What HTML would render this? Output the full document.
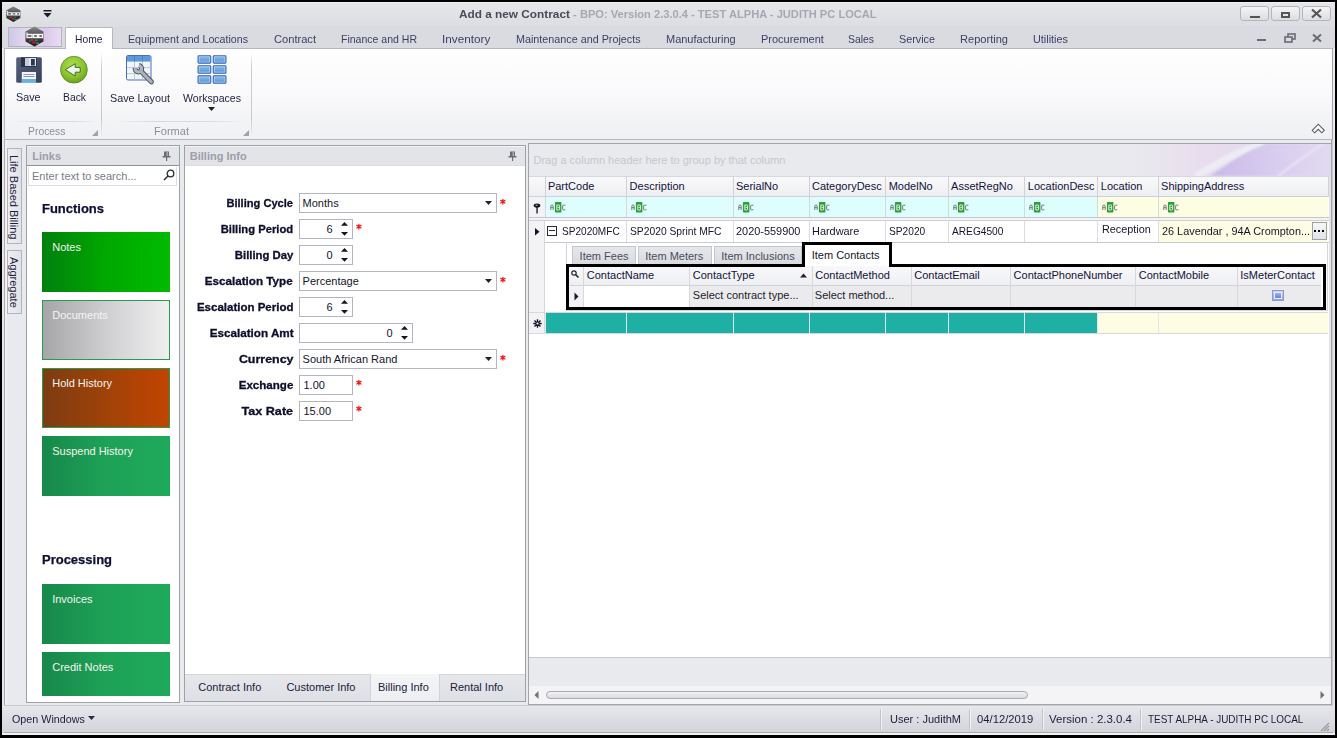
<!DOCTYPE html>
<html><head><meta charset="utf-8">
<style>
*{margin:0;padding:0;box-sizing:border-box}
html,body{width:1337px;height:738px;overflow:hidden;background:#000}
body{position:relative;font-family:"Liberation Sans",sans-serif;font-size:11px;color:#1e1e2e}
.a{position:absolute}
.t{position:absolute;white-space:nowrap;line-height:1}
svg{position:absolute;overflow:visible}
</style></head><body>
<div class="a" style="left:2px;top:2px;width:1333px;height:733px;background:#e9eaed"></div>
<div class="a" style="left:2px;top:140px;width:2px;height:595px;background:#e6e7ec"></div>
<div class="a" style="left:4px;top:140px;width:1px;height:595px;background:#a9abb1"></div>
<div class="a" style="left:5px;top:140px;width:2px;height:565px;background:#f0f1f4"></div>
<div class="a" style="left:1331px;top:140px;width:1px;height:595px;background:#a3a5ab"></div>
<div class="a" style="left:1332px;top:140px;width:1px;height:595px;background:#c8cad0"></div>
<div class="a" style="left:1333px;top:140px;width:2px;height:595px;background:#e4e5ea"></div>
<div class="a" style="left:2px;top:2px;width:1333px;height:25px;background:linear-gradient(#e6e7ea,#dcdde1)"></div>
<div class="a" style="left:2px;top:2px;width:1333px;height:1px;background:#f0f1f3"></div>
<svg style="left:6px;top:6px" width="14.8" height="16.4" viewBox="0 0 19 21">
<defs><linearGradient id="lg1" x1="0" y1="0" x2="0" y2="1"><stop offset="0" stop-color="#8a8a8a"/><stop offset="0.45" stop-color="#4a4a4a"/><stop offset="1" stop-color="#1e1e1e"/></linearGradient></defs>
<polygon points="9.5,0.5 18.5,5.5 18.5,15.5 9.5,20.5 0.5,15.5 0.5,5.5" fill="url(#lg1)"/>
<path d="M2,6.5 V11.5 H7 V8.5 H2 M8.5,8.5 H12.5 V11.5 H8.5 Z M13.8,8.5 H17.5 V11.5 H13.8 Z" stroke="#f4f4f4" stroke-width="1.3" fill="none"/>
<rect x="6" y="13" width="2" height="2" fill="#c82838"/><rect x="7.5" y="15.5" width="3" height="2" fill="#d02030"/>
<rect x="10" y="13.5" width="2.5" height="1.5" fill="#2a8a6a"/><rect x="11" y="16.5" width="3" height="1.5" fill="#2a8a6a"/><rect x="4" y="14" width="1.5" height="2" fill="#3a6a5a"/>
</svg>
<svg style="left:43px;top:10px" width="9" height="8" viewBox="0 0 9 8">
<rect x="0.5" y="0" width="8" height="1.5" fill="#1b1b2b"/>
<polygon points="0.5,3 8.5,3 4.5,7.5" fill="#1b1b2b"/></svg>
<div class="t" style="left:459.3px;top:7.80px;font-size:11.7px;color:#4b4c58;font-weight:bold;transform:scaleX(1.0104);transform-origin:0 0;">Add a new Contract</div>
<div class="t" style="left:569.5px;top:7.80px;font-size:11.7px;color:#a6a8b1;font-weight:bold;transform:scaleX(0.9508);transform-origin:0 0;">&nbsp;- BPO: Version 2.3.0.4 - TEST ALPHA - JUDITH PC LOCAL</div>
<div class="a" style="left:1240px;top:6px;width:29px;height:15px;border:1px solid #b3b5bb;border-radius:3px;background:linear-gradient(#f4f4f6,#dcdde1)"></div>
<div class="a" style="left:1271px;top:6px;width:29px;height:15px;border:1px solid #b3b5bb;border-radius:3px;background:linear-gradient(#f4f4f6,#dcdde1)"></div>
<div class="a" style="left:1302px;top:6px;width:29px;height:15px;border:1px solid #b3b5bb;border-radius:3px;background:linear-gradient(#f4f4f6,#dcdde1)"></div>
<div class="a" style="left:1250px;top:16px;width:10px;height:2px;background:#555"></div>
<div class="a" style="left:1281px;top:12px;width:9px;height:6px;border:2px solid #555;border-top-width:2px"></div>
<svg style="left:1311px;top:9px" width="11" height="9" viewBox="0 0 11 9">
<path d="M1,0.5 L10,8.5 M10,0.5 L1,8.5" stroke="#555" stroke-width="2.2"/></svg>
<div class="a" style="left:2px;top:27px;width:1333px;height:21px;background:#dadbe0"></div>
<div class="a" style="left:8px;top:27px;width:54px;height:20px;border:1px solid #b4b2bd;background:linear-gradient(90deg,#cfc7e8,#e6dcf0 40%,#dcc8ea 70%,#e8dcf2)"></div>
<svg style="left:25px;top:26px" width="19.0" height="21.0" viewBox="0 0 19 21">
<defs><linearGradient id="lg2" x1="0" y1="0" x2="0" y2="1"><stop offset="0" stop-color="#8a8a8a"/><stop offset="0.45" stop-color="#4a4a4a"/><stop offset="1" stop-color="#1e1e1e"/></linearGradient></defs>
<polygon points="9.5,0.5 18.5,5.5 18.5,15.5 9.5,20.5 0.5,15.5 0.5,5.5" fill="url(#lg2)"/>
<path d="M2,6.5 V11.5 H7 V8.5 H2 M8.5,8.5 H12.5 V11.5 H8.5 Z M13.8,8.5 H17.5 V11.5 H13.8 Z" stroke="#f4f4f4" stroke-width="1.3" fill="none"/>
<rect x="6" y="13" width="2" height="2" fill="#c82838"/><rect x="7.5" y="15.5" width="3" height="2" fill="#d02030"/>
<rect x="10" y="13.5" width="2.5" height="1.5" fill="#2a8a6a"/><rect x="11" y="16.5" width="3" height="1.5" fill="#2a8a6a"/><rect x="4" y="14" width="1.5" height="2" fill="#3a6a5a"/>
</svg>
<div class="a" style="left:65px;top:27px;width:48px;height:22px;background:#fff;border:1px solid #b6b8bf;border-bottom:none;border-radius:2px 2px 0 0"></div>
<div class="t" style="left:75.1px;top:33.69px;font-size:11px;color:#1f1f3f;font-weight:normal;transform:scaleX(0.9338);transform-origin:0 0;">Home</div>
<div class="t" style="left:127.5px;top:33.69px;font-size:11px;color:#3e4064;font-weight:normal;transform:scaleX(0.9666);transform-origin:0 0;">Equipment and Locations</div>
<div class="t" style="left:273.5px;top:33.69px;font-size:11px;color:#3e4064;font-weight:normal;transform:scaleX(1.0103);transform-origin:0 0;">Contract</div>
<div class="t" style="left:340.5px;top:33.69px;font-size:11px;color:#3e4064;font-weight:normal;transform:scaleX(0.9561);transform-origin:0 0;">Finance and HR</div>
<div class="t" style="left:442.1px;top:33.69px;font-size:11px;color:#3e4064;font-weight:normal;transform:scaleX(1.0697);transform-origin:0 0;">Inventory</div>
<div class="t" style="left:515.9px;top:33.69px;font-size:11px;color:#3e4064;font-weight:normal;transform:scaleX(0.9796);transform-origin:0 0;">Maintenance and Projects</div>
<div class="t" style="left:665.9px;top:33.69px;font-size:11px;color:#3e4064;font-weight:normal;transform:scaleX(0.9984);transform-origin:0 0;">Manufacturing</div>
<div class="t" style="left:760.5px;top:33.69px;font-size:11px;color:#3e4064;font-weight:normal;transform:scaleX(0.9972);transform-origin:0 0;">Procurement</div>
<div class="t" style="left:847.5px;top:33.69px;font-size:11px;color:#3e4064;font-weight:normal;transform:scaleX(0.9449);transform-origin:0 0;">Sales</div>
<div class="t" style="left:898.5px;top:33.69px;font-size:11px;color:#3e4064;font-weight:normal;transform:scaleX(0.9814);transform-origin:0 0;">Service</div>
<div class="t" style="left:959.5px;top:33.69px;font-size:11px;color:#3e4064;font-weight:normal;transform:scaleX(1.0064);transform-origin:0 0;">Reporting</div>
<div class="t" style="left:1032.5px;top:33.69px;font-size:11px;color:#3e4064;font-weight:normal;transform:scaleX(0.9873);transform-origin:0 0;">Utilities</div>
<div class="a" style="left:1257px;top:39px;width:9px;height:2px;background:#6a6a72"></div>
<svg style="left:1284px;top:33px" width="12" height="10" viewBox="0 0 12 10">
<rect x="4" y="1" width="7" height="5" fill="none" stroke="#6a6a72" stroke-width="1.6"/>
<rect x="1" y="4" width="7" height="5" fill="#dadbe0" stroke="#6a6a72" stroke-width="1.6"/></svg>
<svg style="left:1312px;top:34px" width="10" height="8" viewBox="0 0 10 8">
<path d="M1,0.5 L9,7.5 M9,0.5 L1,7.5" stroke="#6a6a72" stroke-width="2"/></svg>
<div class="a" style="left:4px;top:48px;width:1329px;height:92px;background:linear-gradient(#ffffff,#f9f9fb 50%,#eff0f3);border:1px solid #b5b7be;border-right-color:#a3a5ab"></div>
<div class="a" style="left:66px;top:48px;width:46px;height:2px;background:#fff"></div>
<div class="a" style="left:101px;top:52px;width:1px;height:85px;background:linear-gradient(rgba(200,202,208,0),#c8cad0 20%,#c8cad0 80%,rgba(200,202,208,0))"></div>
<div class="a" style="left:251px;top:52px;width:1px;height:85px;background:linear-gradient(rgba(200,202,208,0),#c8cad0 20%,#c8cad0 80%,rgba(200,202,208,0))"></div>
<div class="a" style="left:14px;top:121px;width:84px;height:1px;background:linear-gradient(90deg,rgba(215,217,222,0),#d7d9de 30%,#d7d9de 70%,rgba(215,217,222,0))"></div>
<div class="a" style="left:112px;top:121px;width:136px;height:1px;background:linear-gradient(90deg,rgba(215,217,222,0),#d7d9de 30%,#d7d9de 70%,rgba(215,217,222,0))"></div>
<div class="t" style="left:27.5px;top:126.39px;font-size:11px;color:#8c8e98;font-weight:normal;transform:scaleX(0.9437);transform-origin:0 0;">Process</div>
<div class="t" style="left:153.6px;top:126.39px;font-size:11px;color:#8c8e98;font-weight:normal;transform:scaleX(1.0046);transform-origin:0 0;">Format</div>
<svg style="left:92px;top:130px" width="6" height="6" viewBox="0 0 6 6"><polygon points="6,0 6,6 0,6" fill="#a0a2a8"/></svg>
<svg style="left:243px;top:130px" width="6" height="6" viewBox="0 0 6 6"><polygon points="6,0 6,6 0,6" fill="#a0a2a8"/></svg>
<svg style="left:1311px;top:123px" width="14" height="11" viewBox="0 0 14 11">
<polygon points="1.2,7.3 7.3,1.2 13.3,7.3 10.8,9.8 7.3,6.3 3.7,9.8" fill="#fbfbfc" stroke="#5c5c64" stroke-width="1.1" stroke-linejoin="miter"/></svg>
<svg style="left:16px;top:57px" width="26" height="26" viewBox="0 0 26 26">
<defs><linearGradient id="fl" x1="0" y1="0" x2="1" y2="1"><stop offset="0" stop-color="#56627e"/><stop offset="1" stop-color="#36405a"/></linearGradient></defs>
<rect x="0.2" y="0.2" width="25.6" height="25.6" rx="1.5" fill="url(#fl)"/>
<rect x="5" y="0.3" width="15.7" height="9.7" fill="#2a3248"/>
<rect x="9" y="1" width="11" height="8" fill="#dfe4ec"/>
<rect x="9" y="1" width="4" height="8" fill="#c4ccd8"/>
<rect x="15" y="2" width="3.8" height="6.5" fill="#2e3850"/>
<rect x="5.8" y="15" width="14.2" height="10.8" fill="#f4f6fa"/>
<rect x="5.8" y="22" width="14.2" height="3.8" fill="#6cb0e0"/>
<line x1="7.5" y1="17.5" x2="18.5" y2="17.5" stroke="#a890d0" stroke-width="1"/>
<line x1="7.5" y1="19.5" x2="18.5" y2="19.5" stroke="#6a9ad8" stroke-width="1"/>
</svg>
<div class="t" style="left:16px;top:92.49px;font-size:11px;color:#1f1f3f;font-weight:normal;transform:scaleX(0.9771);transform-origin:0 0;">Save</div>
<svg style="left:60px;top:56px" width="28" height="28" viewBox="0 0 28 28">
<defs><radialGradient id="gb" cx="0.45" cy="0.35" r="0.7"><stop offset="0" stop-color="#b0de50"/><stop offset="0.6" stop-color="#8cc232"/><stop offset="1" stop-color="#5e9a1c"/></radialGradient></defs>
<circle cx="13.9" cy="13.7" r="13.4" fill="url(#gb)" stroke="#5a8a1e" stroke-width="0.8"/>
<polygon points="5.3,13.7 15.2,7.7 15.2,11.4 20.2,11.4 20.2,16.2 15.2,16.2 15.2,20" fill="#f0f4ec" stroke="#3e7210" stroke-width="1"/>
</svg>
<div class="t" style="left:62.5px;top:92.49px;font-size:11px;color:#1f1f3f;font-weight:normal;transform:scaleX(0.9405);transform-origin:0 0;">Back</div>
<svg style="left:125px;top:55px" width="30" height="30" viewBox="0 0 30 30">
<rect x="1.5" y="0.5" width="24.5" height="24.5" rx="1.5" fill="#f2f6fc" stroke="#4a6cc0"/>
<rect x="2" y="1" width="23.5" height="5.6" fill="#5f9ad8"/>
<path d="M2,12.6 H25.5 M2,18.6 H25.5 M9.5,6.6 V24.5 M17.5,6.6 V24.5" stroke="#b8c8e2" stroke-width="1"/>
<path d="M9.5,1 V6.6 M17.5,1 V6.6" stroke="#4a84c8" stroke-width="1"/>
<path d="M13.96,10.55 A3.2,3.2 0 1 1 10.25,13.14" stroke="#50565e" stroke-width="5" fill="none"/>
<line x1="15.5" y1="15.8" x2="26.3" y2="26.8" stroke="#50565e" stroke-width="5.2" stroke-linecap="round"/>
<path d="M13.96,10.55 A3.2,3.2 0 1 1 10.25,13.14" stroke="#b4bac4" stroke-width="3" fill="none"/>
<line x1="15.5" y1="15.8" x2="26.3" y2="26.8" stroke="#aab0ba" stroke-width="3.2" stroke-linecap="round"/>
</svg>
<div class="t" style="left:109.7px;top:92.69px;font-size:11px;color:#1f1f3f;font-weight:normal;transform:scaleX(0.9811);transform-origin:0 0;">Save Layout</div>
<svg style="left:196.5px;top:55px" width="30" height="30" viewBox="0 0 30 30"><defs><linearGradient id="wsg" x1="0" y1="0" x2="0" y2="1"><stop offset="0" stop-color="#86b8e4"/><stop offset="1" stop-color="#5896d2"/></linearGradient></defs><rect x="1.05" y="0.75" width="12.7" height="7.4" rx="0.8" fill="url(#wsg)" stroke="#3c68bc" stroke-width="1.1"/><rect x="2.15" y="1.85" width="10.5" height="5.2" fill="none" stroke="#c4def4" stroke-width="0.7" opacity="0.8"/><rect x="16.25" y="0.75" width="12.7" height="7.4" rx="0.8" fill="url(#wsg)" stroke="#3c68bc" stroke-width="1.1"/><rect x="17.35" y="1.85" width="10.5" height="5.2" fill="none" stroke="#c4def4" stroke-width="0.7" opacity="0.8"/><rect x="1.05" y="10.80" width="12.7" height="7.4" rx="0.8" fill="url(#wsg)" stroke="#3c68bc" stroke-width="1.1"/><rect x="2.15" y="11.90" width="10.5" height="5.2" fill="none" stroke="#c4def4" stroke-width="0.7" opacity="0.8"/><rect x="16.25" y="10.80" width="12.7" height="7.4" rx="0.8" fill="url(#wsg)" stroke="#3c68bc" stroke-width="1.1"/><rect x="17.35" y="11.90" width="10.5" height="5.2" fill="none" stroke="#c4def4" stroke-width="0.7" opacity="0.8"/><rect x="1.05" y="20.85" width="12.7" height="7.4" rx="0.8" fill="url(#wsg)" stroke="#3c68bc" stroke-width="1.1"/><rect x="2.15" y="21.95" width="10.5" height="5.2" fill="none" stroke="#c4def4" stroke-width="0.7" opacity="0.8"/><rect x="16.25" y="20.85" width="12.7" height="7.4" rx="0.8" fill="url(#wsg)" stroke="#3c68bc" stroke-width="1.1"/><rect x="17.35" y="21.95" width="10.5" height="5.2" fill="none" stroke="#c4def4" stroke-width="0.7" opacity="0.8"/></svg>
<div class="t" style="left:183px;top:92.69px;font-size:11px;color:#1f1f3f;font-weight:normal;transform:scaleX(0.9616);transform-origin:0 0;">Workspaces</div>
<svg style="left:208px;top:107px" width="7" height="4" viewBox="0 0 7 4"><polygon points="0,0 7,0 3.5,4" fill="#1f1f2f"/></svg>
<div class="a" style="left:7px;top:148px;width:15px;height:96px;background:linear-gradient(90deg,#eeeff2,#e2e3e7);border:1px solid #b2b4ba"></div>
<div class="a" style="left:7px;top:250px;width:15px;height:64px;background:linear-gradient(90deg,#eeeff2,#e2e3e7);border:1px solid #b2b4ba"></div>
<div class="t" style="left:10px;top:154.6px;font-size:11px;color:#1f1f3f;transform-origin:0 0;transform:translate(9px,0) rotate(90deg)">Life Based Billing</div>
<div class="t" style="left:10px;top:256.6px;font-size:11px;color:#1f1f3f;transform-origin:0 0;transform:translate(9px,0) rotate(90deg)">Aggregate</div>
<div class="a" style="left:26px;top:145px;width:154px;height:558px;background:#fff;border:1px solid #9fa1a9"></div>
<div class="a" style="left:27px;top:146px;width:152px;height:20px;background:#e3e4e8;border-top:1px solid #f4f4f6;border-bottom:1px solid #8f9199"></div>
<div class="t" style="left:32.3px;top:150.59px;font-size:11px;color:#9c9eaa;font-weight:bold;">Links</div>
<svg style="left:162px;top:151px" width="9" height="10" viewBox="0 0 9 10">
<rect x="2" y="0.5" width="5" height="5" fill="#6b6d75"/><rect x="0.5" y="5" width="8" height="1.5" fill="#6b6d75"/>
<rect x="4" y="6" width="1.2" height="4" fill="#6b6d75"/><rect x="4.5" y="1" width="1.5" height="4" fill="#a8aab0"/></svg>
<div class="a" style="left:28px;top:167px;width:149px;height:19px;background:#fff;border:1px solid #dcdde2;border-top:none"></div>
<div class="t" style="left:32px;top:170.89px;font-size:11px;color:#7a7c86;font-weight:normal;">Enter text to search...</div>
<svg style="left:163px;top:169px" width="12" height="12" viewBox="0 0 12 12">
<circle cx="7.5" cy="4.5" r="3.3" fill="none" stroke="#2a2a32" stroke-width="1.3"/>
<line x1="5.2" y1="6.8" x2="1" y2="11" stroke="#2a2a32" stroke-width="1.4"/></svg>
<div class="t" style="left:42px;top:201.60px;font-size:13px;color:#0e0e34;font-weight:bold;transform:scaleX(0.9983);transform-origin:0 0;-webkit-text-stroke:0.25px #0e0e34;">Functions</div>
<div class="t" style="left:42px;top:553.20px;font-size:13px;color:#0e0e34;font-weight:bold;transform:scaleX(0.9988);transform-origin:0 0;-webkit-text-stroke:0.25px #0e0e34;">Processing</div>
<div class="a" style="left:42px;top:232px;width:128px;height:60px;background:linear-gradient(90deg,#00800f,#00a800 50%,#00bb00);"></div>
<div class="t" style="left:52.2px;top:241.69px;font-size:11px;color:#f4f4ec;font-weight:normal;">Notes</div>
<div class="a" style="left:42px;top:300px;width:128px;height:60px;background:linear-gradient(90deg,#a6a6a8,#d2d2d4 55%,#efeff0);border:1px solid #2a9a52;"></div>
<div class="t" style="left:52.2px;top:309.69px;font-size:11px;color:#f4f4f4;font-weight:normal;">Documents</div>
<div class="a" style="left:42px;top:368px;width:128px;height:60px;background:linear-gradient(90deg,#7c3c12,#a04208 50%,#c24400);border:1px solid #22a050;"></div>
<div class="t" style="left:52.2px;top:377.69px;font-size:11px;color:#f4f4ec;font-weight:normal;">Hold History</div>
<div class="a" style="left:42px;top:436px;width:128px;height:60px;background:linear-gradient(90deg,#17884a,#1da257 50%,#1fa95b);"></div>
<div class="t" style="left:52.2px;top:445.69px;font-size:11px;color:#f4f4ec;font-weight:normal;">Suspend History</div>
<div class="a" style="left:42px;top:584px;width:128px;height:60px;background:linear-gradient(90deg,#17884a,#1da257 50%,#1fa95b);"></div>
<div class="t" style="left:52.2px;top:593.69px;font-size:11px;color:#f4f4ec;font-weight:normal;">Invoices</div>
<div class="a" style="left:42px;top:652px;width:128px;height:44px;background:linear-gradient(90deg,#17884a,#1da257 50%,#1fa95b);"></div>
<div class="t" style="left:52.2px;top:661.69px;font-size:11px;color:#f4f4ec;font-weight:normal;">Credit Notes</div>
<div class="a" style="left:184px;top:145px;width:342px;height:557px;background:#fff;border:1px solid #9fa1a9"></div>
<div class="a" style="left:185px;top:146px;width:340px;height:20px;background:#e3e4e8;border-top:1px solid #f4f4f6;border-bottom:1px solid #dcdde1"></div>
<div class="t" style="left:189.8px;top:150.59px;font-size:11px;color:#9c9eaa;font-weight:bold;">Billing Info</div>
<svg style="left:508px;top:151px" width="9" height="10" viewBox="0 0 9 10">
<rect x="2" y="0.5" width="5" height="5" fill="#6b6d75"/><rect x="0.5" y="5" width="8" height="1.5" fill="#6b6d75"/>
<rect x="4" y="6" width="1.2" height="4" fill="#6b6d75"/><rect x="4.5" y="1" width="1.5" height="4" fill="#a8aab0"/></svg>
<div class="t" style="right:1043.8px;top:197.87px;font-size:11.5px;color:#0e0e2c;font-weight:bold;transform:scaleX(0.9650);transform-origin:100% 0;-webkit-text-stroke:0.3px #0e0e2c;">Billing Cycle</div>
<div class="a" style="left:299px;top:193px;width:198px;height:20px;background:#fff;border:1px solid #b4b6bd"></div>
<div class="t" style="left:302.6px;top:197.79px;font-size:11px;color:#14142c;font-weight:normal;">Months</div>
<svg style="left:485px;top:201px" width="7" height="4" viewBox="0 0 7 4"><polygon points="0,0 7,0 3.5,4" fill="#23232b"/></svg>
<svg style="left:500px;top:198.5px" width="6" height="6" viewBox="0 0 6 6"><path d="M2.9,0.3 V5.1 M0.8,1.4 L5,4 M5,1.4 L0.8,4" stroke="#f21c1c" stroke-width="1.25" stroke-linecap="round"/></svg>
<div class="t" style="right:1043.8px;top:223.87px;font-size:11.5px;color:#0e0e2c;font-weight:bold;transform:scaleX(0.9769);transform-origin:100% 0;-webkit-text-stroke:0.3px #0e0e2c;">Billing Period</div>
<div class="a" style="left:299px;top:219px;width:54px;height:20px;background:#fff;border:1px solid #b4b6bd"></div>
<div class="t" style="right:1004.5px;top:223.99px;font-size:11px;color:#14142c;font-weight:normal;">6</div>
<svg style="left:341px;top:221.8px" width="8" height="14" viewBox="0 0 8 14">
<polygon points="0,3.8 7,3.8 3.5,0" fill="#15151d"/><polygon points="0,9.9 7,9.9 3.5,13.7" fill="#15151d"/></svg>
<svg style="left:355.6px;top:223.5px" width="6" height="6" viewBox="0 0 6 6"><path d="M2.9,0.3 V5.1 M0.8,1.4 L5,4 M5,1.4 L0.8,4" stroke="#f21c1c" stroke-width="1.25" stroke-linecap="round"/></svg>
<div class="t" style="right:1043.8px;top:249.87px;font-size:11.5px;color:#0e0e2c;font-weight:bold;transform:scaleX(0.9861);transform-origin:100% 0;-webkit-text-stroke:0.3px #0e0e2c;">Billing Day</div>
<div class="a" style="left:299px;top:245px;width:54px;height:20px;background:#fff;border:1px solid #b4b6bd"></div>
<div class="t" style="right:1004.5px;top:249.99px;font-size:11px;color:#14142c;font-weight:normal;">0</div>
<svg style="left:341px;top:247.8px" width="8" height="14" viewBox="0 0 8 14">
<polygon points="0,3.8 7,3.8 3.5,0" fill="#15151d"/><polygon points="0,9.9 7,9.9 3.5,13.7" fill="#15151d"/></svg>
<div class="t" style="right:1043.8px;top:275.87px;font-size:11.5px;color:#0e0e2c;font-weight:bold;transform:scaleX(1.0149);transform-origin:100% 0;-webkit-text-stroke:0.3px #0e0e2c;">Escalation Type</div>
<div class="a" style="left:299px;top:271px;width:198px;height:20px;background:#fff;border:1px solid #b4b6bd"></div>
<div class="t" style="left:302.6px;top:275.79px;font-size:11px;color:#14142c;font-weight:normal;">Percentage</div>
<svg style="left:485px;top:279px" width="7" height="4" viewBox="0 0 7 4"><polygon points="0,0 7,0 3.5,4" fill="#23232b"/></svg>
<svg style="left:500px;top:276.5px" width="6" height="6" viewBox="0 0 6 6"><path d="M2.9,0.3 V5.1 M0.8,1.4 L5,4 M5,1.4 L0.8,4" stroke="#f21c1c" stroke-width="1.25" stroke-linecap="round"/></svg>
<div class="t" style="right:1043.8px;top:301.87px;font-size:11.5px;color:#0e0e2c;font-weight:bold;transform:scaleX(1.0010);transform-origin:100% 0;-webkit-text-stroke:0.3px #0e0e2c;">Escalation Period</div>
<div class="a" style="left:299px;top:297px;width:54px;height:20px;background:#fff;border:1px solid #b4b6bd"></div>
<div class="t" style="right:1004.5px;top:301.99px;font-size:11px;color:#14142c;font-weight:normal;">6</div>
<svg style="left:341px;top:299.8px" width="8" height="14" viewBox="0 0 8 14">
<polygon points="0,3.8 7,3.8 3.5,0" fill="#15151d"/><polygon points="0,9.9 7,9.9 3.5,13.7" fill="#15151d"/></svg>
<div class="t" style="right:1043.8px;top:327.87px;font-size:11.5px;color:#0e0e2c;font-weight:bold;transform:scaleX(1.0163);transform-origin:100% 0;-webkit-text-stroke:0.3px #0e0e2c;">Escalation Amt</div>
<div class="a" style="left:299px;top:323px;width:114px;height:20px;background:#fff;border:1px solid #b4b6bd"></div>
<div class="t" style="right:944.5px;top:327.99px;font-size:11px;color:#14142c;font-weight:normal;">0</div>
<svg style="left:401px;top:325.8px" width="8" height="14" viewBox="0 0 8 14">
<polygon points="0,3.8 7,3.8 3.5,0" fill="#15151d"/><polygon points="0,9.9 7,9.9 3.5,13.7" fill="#15151d"/></svg>
<div class="t" style="right:1043.8px;top:353.87px;font-size:11.5px;color:#0e0e2c;font-weight:bold;transform:scaleX(1.0813);transform-origin:100% 0;-webkit-text-stroke:0.3px #0e0e2c;">Currency</div>
<div class="a" style="left:299px;top:349px;width:198px;height:20px;background:#fff;border:1px solid #b4b6bd"></div>
<div class="t" style="left:302.6px;top:353.79px;font-size:11px;color:#14142c;font-weight:normal;">South African Rand</div>
<svg style="left:485px;top:357px" width="7" height="4" viewBox="0 0 7 4"><polygon points="0,0 7,0 3.5,4" fill="#23232b"/></svg>
<svg style="left:500px;top:354.5px" width="6" height="6" viewBox="0 0 6 6"><path d="M2.9,0.3 V5.1 M0.8,1.4 L5,4 M5,1.4 L0.8,4" stroke="#f21c1c" stroke-width="1.25" stroke-linecap="round"/></svg>
<div class="t" style="right:1043.8px;top:379.87px;font-size:11.5px;color:#0e0e2c;font-weight:bold;transform:scaleX(1.0050);transform-origin:100% 0;-webkit-text-stroke:0.3px #0e0e2c;">Exchange</div>
<div class="a" style="left:299px;top:375px;width:54px;height:20px;background:#fff;border:1px solid #b4b6bd"></div>
<div class="t" style="left:303.5px;top:379.99px;font-size:11px;color:#14142c;font-weight:normal;">1.00</div>
<svg style="left:355.6px;top:379.5px" width="6" height="6" viewBox="0 0 6 6"><path d="M2.9,0.3 V5.1 M0.8,1.4 L5,4 M5,1.4 L0.8,4" stroke="#f21c1c" stroke-width="1.25" stroke-linecap="round"/></svg>
<div class="t" style="right:1043.8px;top:405.87px;font-size:11.5px;color:#0e0e2c;font-weight:bold;transform:scaleX(1.0959);transform-origin:100% 0;-webkit-text-stroke:0.3px #0e0e2c;">Tax Rate</div>
<div class="a" style="left:299px;top:401px;width:54px;height:20px;background:#fff;border:1px solid #b4b6bd"></div>
<div class="t" style="left:303.5px;top:405.99px;font-size:11px;color:#14142c;font-weight:normal;">15.00</div>
<svg style="left:355.6px;top:405.5px" width="6" height="6" viewBox="0 0 6 6"><path d="M2.9,0.3 V5.1 M0.8,1.4 L5,4 M5,1.4 L0.8,4" stroke="#f21c1c" stroke-width="1.25" stroke-linecap="round"/></svg>
<div class="a" style="left:185px;top:674px;width:340px;height:27px;background:linear-gradient(#e6e7eb,#dfe0e5);border-top:1px solid #d4d6db"></div>
<div class="a" style="left:370px;top:674px;width:70px;height:27px;background:linear-gradient(#f4f5f7,#eceef1);border-left:1px solid #d0d2d8;border-right:1px solid #d0d2d8"></div>
<div class="t" style="left:198.3px;top:681.89px;font-size:11px;color:#20203a;font-weight:normal;">Contract Info</div>
<div class="t" style="left:286.4px;top:681.89px;font-size:11px;color:#20203a;font-weight:normal;">Customer Info</div>
<div class="t" style="left:378px;top:681.89px;font-size:11px;color:#20203a;font-weight:normal;">Billing Info</div>
<div class="t" style="left:450px;top:681.89px;font-size:11px;color:#20203a;font-weight:normal;">Rental Info</div>
<div class="a" style="left:528px;top:143px;width:804px;height:562px;background:#fff;border:1px solid #a3a5ad"></div>
<div class="a" style="left:529px;top:144px;width:802px;height:32px;background:#e9eaee"></div>
<svg style="left:1098px;top:144px;overflow:hidden" width="233" height="32" viewBox="0 0 233 32">
<defs>
<linearGradient id="pk" x1="0" x2="1"><stop offset="0" stop-color="#e9eaee" stop-opacity="0"/><stop offset="0.45" stop-color="#e8dcee"/><stop offset="1" stop-color="#e4daf0"/></linearGradient>
<linearGradient id="lv" x1="0" y1="0" x2="1" y2="0"><stop offset="0" stop-color="#c8b9e8"/><stop offset="0.45" stop-color="#d6caee"/><stop offset="1" stop-color="#e2daf2"/></linearGradient>
<filter id="bl"><feGaussianBlur stdDeviation="1.2"/></filter>
</defs>
<rect x="0" y="0" width="233" height="32" fill="url(#pk)"/>
<path d="M98,32 C122,18 142,6 166,0" stroke="#efeff4" stroke-width="7" opacity="0.85" fill="none" filter="url(#bl)"/>
<path d="M112,32 C135,17 150,6 168,0 L233,0 L233,32 Z" fill="url(#lv)" filter="url(#bl)"/>
<path d="M180,32 C198,18 212,8 226,0" stroke="#ece6f6" stroke-width="2" fill="none" filter="url(#bl)"/>
</svg>
<div class="t" style="left:533.5px;top:155.39px;font-size:11px;color:#c5c7cd;font-weight:normal;">Drag a column header here to group by that column</div>
<div class="a" style="left:529px;top:176px;width:800px;height:21px;background:linear-gradient(#f9f9fb,#eeeff2);border-top:1px solid #d6d8dd;border-bottom:1px solid #cdd0d5"></div>
<div class="a" style="left:1329px;top:176px;width:2px;height:481px;background:#e3e4e8"></div>
<div class="a" style="left:544.5px;top:176px;width:1px;height:21px;background:#d0d2d7"></div>
<div class="t" style="left:547.9px;top:181.49px;font-size:11px;color:#12123a;font-weight:normal;">PartCode</div>
<div class="a" style="left:626.2px;top:176px;width:1px;height:21px;background:#d0d2d7"></div>
<div class="t" style="left:629.6px;top:181.49px;font-size:11px;color:#12123a;font-weight:normal;">Description</div>
<div class="a" style="left:732.6px;top:176px;width:1px;height:21px;background:#d0d2d7"></div>
<div class="t" style="left:736.0px;top:181.49px;font-size:11px;color:#12123a;font-weight:normal;">SerialNo</div>
<div class="a" style="left:808.6px;top:176px;width:1px;height:21px;background:#d0d2d7"></div>
<div class="t" style="left:812.0px;top:181.49px;font-size:11px;color:#12123a;font-weight:normal;">CategoryDesc</div>
<div class="a" style="left:885.3px;top:176px;width:1px;height:21px;background:#d0d2d7"></div>
<div class="t" style="left:888.6999999999999px;top:181.49px;font-size:11px;color:#12123a;font-weight:normal;">ModelNo</div>
<div class="a" style="left:947.7px;top:176px;width:1px;height:21px;background:#d0d2d7"></div>
<div class="t" style="left:951.1px;top:181.49px;font-size:11px;color:#12123a;font-weight:normal;">AssetRegNo</div>
<div class="a" style="left:1024.4px;top:176px;width:1px;height:21px;background:#d0d2d7"></div>
<div class="t" style="left:1027.8000000000002px;top:181.49px;font-size:11px;color:#12123a;font-weight:normal;">LocationDesc</div>
<div class="a" style="left:1097.4px;top:176px;width:1px;height:21px;background:#d0d2d7"></div>
<div class="t" style="left:1100.8000000000002px;top:181.49px;font-size:11px;color:#12123a;font-weight:normal;">Location</div>
<div class="a" style="left:1157.7px;top:176px;width:1px;height:21px;background:#d0d2d7"></div>
<div class="t" style="left:1161.1000000000001px;top:181.49px;font-size:11px;color:#12123a;font-weight:normal;">ShippingAddress</div>
<div class="a" style="left:1328px;top:176px;width:1px;height:21px;background:#d0d2d7"></div>
<div class="a" style="left:529px;top:197px;width:16px;height:20px;background:#f3f3f5"></div>
<div class="a" style="left:544.5px;top:197px;width:81.70000000000005px;height:20px;background:#defdfd;border-left:1px solid #d6d8dd"></div>
<svg style="left:549.5px;top:202.2px" width="16" height="11" viewBox="0 0 16 11"><rect x="4.9" y="0" width="6.5" height="10.5" rx="0.8" fill="#2f9e3b"/><path d="M0.8,8 V4.2 Q0.8,3 2,3 Q3.2,3 3.2,4.2 V8 M0.8,5.6 H3.2" stroke="#6a6c74" stroke-width="0.9" fill="none"/><path d="M6.8,3 H9 Q9.6,3 9.6,3.8 V7.2 Q9.6,8 9,8 H6.8 Z" stroke="#f0f8f0" stroke-width="0.9" fill="none"/><rect x="7.6" y="5" width="1.2" height="1" fill="#f0f8f0"/><path d="M15.4,3.2 H13.4 Q12.6,3.2 12.6,4 V7 Q12.6,7.8 13.4,7.8 H15.4" stroke="#6a6c74" stroke-width="0.9" fill="none"/></svg>
<div class="a" style="left:626.2px;top:197px;width:106.39999999999998px;height:20px;background:#defdfd;border-left:1px solid #d6d8dd"></div>
<svg style="left:631.2px;top:202.2px" width="16" height="11" viewBox="0 0 16 11"><rect x="4.9" y="0" width="6.5" height="10.5" rx="0.8" fill="#2f9e3b"/><path d="M0.8,8 V4.2 Q0.8,3 2,3 Q3.2,3 3.2,4.2 V8 M0.8,5.6 H3.2" stroke="#6a6c74" stroke-width="0.9" fill="none"/><path d="M6.8,3 H9 Q9.6,3 9.6,3.8 V7.2 Q9.6,8 9,8 H6.8 Z" stroke="#f0f8f0" stroke-width="0.9" fill="none"/><rect x="7.6" y="5" width="1.2" height="1" fill="#f0f8f0"/><path d="M15.4,3.2 H13.4 Q12.6,3.2 12.6,4 V7 Q12.6,7.8 13.4,7.8 H15.4" stroke="#6a6c74" stroke-width="0.9" fill="none"/></svg>
<div class="a" style="left:732.6px;top:197px;width:76.0px;height:20px;background:#defdfd;border-left:1px solid #d6d8dd"></div>
<svg style="left:737.6px;top:202.2px" width="16" height="11" viewBox="0 0 16 11"><rect x="4.9" y="0" width="6.5" height="10.5" rx="0.8" fill="#2f9e3b"/><path d="M0.8,8 V4.2 Q0.8,3 2,3 Q3.2,3 3.2,4.2 V8 M0.8,5.6 H3.2" stroke="#6a6c74" stroke-width="0.9" fill="none"/><path d="M6.8,3 H9 Q9.6,3 9.6,3.8 V7.2 Q9.6,8 9,8 H6.8 Z" stroke="#f0f8f0" stroke-width="0.9" fill="none"/><rect x="7.6" y="5" width="1.2" height="1" fill="#f0f8f0"/><path d="M15.4,3.2 H13.4 Q12.6,3.2 12.6,4 V7 Q12.6,7.8 13.4,7.8 H15.4" stroke="#6a6c74" stroke-width="0.9" fill="none"/></svg>
<div class="a" style="left:808.6px;top:197px;width:76.69999999999993px;height:20px;background:#defdfd;border-left:1px solid #d6d8dd"></div>
<svg style="left:813.6px;top:202.2px" width="16" height="11" viewBox="0 0 16 11"><rect x="4.9" y="0" width="6.5" height="10.5" rx="0.8" fill="#2f9e3b"/><path d="M0.8,8 V4.2 Q0.8,3 2,3 Q3.2,3 3.2,4.2 V8 M0.8,5.6 H3.2" stroke="#6a6c74" stroke-width="0.9" fill="none"/><path d="M6.8,3 H9 Q9.6,3 9.6,3.8 V7.2 Q9.6,8 9,8 H6.8 Z" stroke="#f0f8f0" stroke-width="0.9" fill="none"/><rect x="7.6" y="5" width="1.2" height="1" fill="#f0f8f0"/><path d="M15.4,3.2 H13.4 Q12.6,3.2 12.6,4 V7 Q12.6,7.8 13.4,7.8 H15.4" stroke="#6a6c74" stroke-width="0.9" fill="none"/></svg>
<div class="a" style="left:885.3px;top:197px;width:62.40000000000009px;height:20px;background:#defdfd;border-left:1px solid #d6d8dd"></div>
<svg style="left:890.3px;top:202.2px" width="16" height="11" viewBox="0 0 16 11"><rect x="4.9" y="0" width="6.5" height="10.5" rx="0.8" fill="#2f9e3b"/><path d="M0.8,8 V4.2 Q0.8,3 2,3 Q3.2,3 3.2,4.2 V8 M0.8,5.6 H3.2" stroke="#6a6c74" stroke-width="0.9" fill="none"/><path d="M6.8,3 H9 Q9.6,3 9.6,3.8 V7.2 Q9.6,8 9,8 H6.8 Z" stroke="#f0f8f0" stroke-width="0.9" fill="none"/><rect x="7.6" y="5" width="1.2" height="1" fill="#f0f8f0"/><path d="M15.4,3.2 H13.4 Q12.6,3.2 12.6,4 V7 Q12.6,7.8 13.4,7.8 H15.4" stroke="#6a6c74" stroke-width="0.9" fill="none"/></svg>
<div class="a" style="left:947.7px;top:197px;width:76.70000000000005px;height:20px;background:#defdfd;border-left:1px solid #d6d8dd"></div>
<svg style="left:952.7px;top:202.2px" width="16" height="11" viewBox="0 0 16 11"><rect x="4.9" y="0" width="6.5" height="10.5" rx="0.8" fill="#2f9e3b"/><path d="M0.8,8 V4.2 Q0.8,3 2,3 Q3.2,3 3.2,4.2 V8 M0.8,5.6 H3.2" stroke="#6a6c74" stroke-width="0.9" fill="none"/><path d="M6.8,3 H9 Q9.6,3 9.6,3.8 V7.2 Q9.6,8 9,8 H6.8 Z" stroke="#f0f8f0" stroke-width="0.9" fill="none"/><rect x="7.6" y="5" width="1.2" height="1" fill="#f0f8f0"/><path d="M15.4,3.2 H13.4 Q12.6,3.2 12.6,4 V7 Q12.6,7.8 13.4,7.8 H15.4" stroke="#6a6c74" stroke-width="0.9" fill="none"/></svg>
<div class="a" style="left:1024.4px;top:197px;width:73.0px;height:20px;background:#defdfd;border-left:1px solid #d6d8dd"></div>
<svg style="left:1029.4px;top:202.2px" width="16" height="11" viewBox="0 0 16 11"><rect x="4.9" y="0" width="6.5" height="10.5" rx="0.8" fill="#2f9e3b"/><path d="M0.8,8 V4.2 Q0.8,3 2,3 Q3.2,3 3.2,4.2 V8 M0.8,5.6 H3.2" stroke="#6a6c74" stroke-width="0.9" fill="none"/><path d="M6.8,3 H9 Q9.6,3 9.6,3.8 V7.2 Q9.6,8 9,8 H6.8 Z" stroke="#f0f8f0" stroke-width="0.9" fill="none"/><rect x="7.6" y="5" width="1.2" height="1" fill="#f0f8f0"/><path d="M15.4,3.2 H13.4 Q12.6,3.2 12.6,4 V7 Q12.6,7.8 13.4,7.8 H15.4" stroke="#6a6c74" stroke-width="0.9" fill="none"/></svg>
<div class="a" style="left:1097.4px;top:197px;width:60.299999999999955px;height:20px;background:#fdfde4;border-left:1px solid #d6d8dd"></div>
<svg style="left:1102.4px;top:202.2px" width="16" height="11" viewBox="0 0 16 11"><rect x="4.9" y="0" width="6.5" height="10.5" rx="0.8" fill="#2f9e3b"/><path d="M0.8,8 V4.2 Q0.8,3 2,3 Q3.2,3 3.2,4.2 V8 M0.8,5.6 H3.2" stroke="#6a6c74" stroke-width="0.9" fill="none"/><path d="M6.8,3 H9 Q9.6,3 9.6,3.8 V7.2 Q9.6,8 9,8 H6.8 Z" stroke="#f0f8f0" stroke-width="0.9" fill="none"/><rect x="7.6" y="5" width="1.2" height="1" fill="#f0f8f0"/><path d="M15.4,3.2 H13.4 Q12.6,3.2 12.6,4 V7 Q12.6,7.8 13.4,7.8 H15.4" stroke="#6a6c74" stroke-width="0.9" fill="none"/></svg>
<div class="a" style="left:1157.7px;top:197px;width:170.79999999999995px;height:20px;background:#fdfde4;border-left:1px solid #d6d8dd"></div>
<svg style="left:1162.7px;top:202.2px" width="16" height="11" viewBox="0 0 16 11"><rect x="4.9" y="0" width="6.5" height="10.5" rx="0.8" fill="#2f9e3b"/><path d="M0.8,8 V4.2 Q0.8,3 2,3 Q3.2,3 3.2,4.2 V8 M0.8,5.6 H3.2" stroke="#6a6c74" stroke-width="0.9" fill="none"/><path d="M6.8,3 H9 Q9.6,3 9.6,3.8 V7.2 Q9.6,8 9,8 H6.8 Z" stroke="#f0f8f0" stroke-width="0.9" fill="none"/><rect x="7.6" y="5" width="1.2" height="1" fill="#f0f8f0"/><path d="M15.4,3.2 H13.4 Q12.6,3.2 12.6,4 V7 Q12.6,7.8 13.4,7.8 H15.4" stroke="#6a6c74" stroke-width="0.9" fill="none"/></svg>
<svg style="left:533px;top:203px" width="8" height="11" viewBox="0 0 8 11">
<ellipse cx="4" cy="2.6" rx="3.3" ry="2.1" fill="#141414"/><ellipse cx="3.6" cy="2.2" rx="1.3" ry="0.7" fill="#9a9a9a"/><rect x="3.4" y="4" width="1.3" height="6.5" fill="#141414"/></svg>
<div class="a" style="left:529px;top:217px;width:800px;height:4px;background:#f4f4f6;border-top:1px solid #c4c6cc;border-bottom:1px solid #cfd1d6"></div>
<div class="a" style="left:529px;top:221px;width:16px;height:91px;background:#f3f3f5;border-right:1px solid #d6d8dd"></div>
<div class="a" style="left:545px;top:221px;width:784px;height:22px;background:#fff;border-bottom:1px solid #c8cacf"></div>
<div class="a" style="left:1158px;top:221px;width:170px;height:21px;background:#fdfde4"></div>
<div class="a" style="left:626.2px;top:221px;width:1px;height:21px;background:#dcdde2"></div>
<div class="a" style="left:732.6px;top:221px;width:1px;height:21px;background:#dcdde2"></div>
<div class="a" style="left:808.6px;top:221px;width:1px;height:21px;background:#dcdde2"></div>
<div class="a" style="left:885.3px;top:221px;width:1px;height:21px;background:#dcdde2"></div>
<div class="a" style="left:947.7px;top:221px;width:1px;height:21px;background:#dcdde2"></div>
<div class="a" style="left:1024.4px;top:221px;width:1px;height:21px;background:#dcdde2"></div>
<div class="a" style="left:1097.4px;top:221px;width:1px;height:21px;background:#dcdde2"></div>
<div class="a" style="left:1157.7px;top:221px;width:1px;height:21px;background:#dcdde2"></div>
<svg style="left:535px;top:227.5px" width="5" height="8" viewBox="0 0 5 8"><polygon points="0,0 4.5,3.8 0,7.6" fill="#15152a"/></svg>
<div class="a" style="left:547px;top:226px;width:10px;height:10px;border:1px solid #2a2a32;background:#fff"></div>
<div class="a" style="left:549px;top:230px;width:6px;height:1.3px;background:#2a2a32"></div>
<div class="t" style="left:562.0px;top:226.39px;font-size:11px;color:#16162a;font-weight:normal;transform:scaleX(0.9163);transform-origin:0 0;">SP2020MFC</div>
<div class="t" style="left:630.0px;top:226.39px;font-size:11px;color:#16162a;font-weight:normal;transform:scaleX(0.9354);transform-origin:0 0;">SP2020 Sprint MFC</div>
<div class="t" style="left:736.0px;top:226.39px;font-size:11px;color:#16162a;font-weight:normal;transform:scaleX(0.9932);transform-origin:0 0;">2020-559900</div>
<div class="t" style="left:812.0px;top:226.39px;font-size:11px;color:#16162a;font-weight:normal;transform:scaleX(0.9919);transform-origin:0 0;">Hardware</div>
<div class="t" style="left:889.0px;top:226.39px;font-size:11px;color:#16162a;font-weight:normal;transform:scaleX(0.9247);transform-origin:0 0;">SP2020</div>
<div class="t" style="left:951.5px;top:226.39px;font-size:11px;color:#16162a;font-weight:normal;transform:scaleX(0.9237);transform-origin:0 0;">AREG4500</div>
<div class="t" style="left:1161.5px;top:226.39px;font-size:11px;color:#16162a;font-weight:normal;transform:scaleX(0.9879);transform-origin:0 0;">26 Lavendar , 94A Crompton...</div>
<div class="t" style="left:1101.5px;top:224.09px;font-size:11px;color:#16162a;font-weight:normal;transform:scaleX(0.9852);transform-origin:0 0;">Reception</div>
<div class="a" style="left:1312px;top:222px;width:15px;height:18px;background:linear-gradient(#f7f7f9,#e2e3e7);border:1px solid #9fa1a9"></div>
<div class="a" style="left:1314px;top:230px;width:2px;height:2px;background:#000"></div>
<div class="a" style="left:1318px;top:230px;width:2px;height:2px;background:#000"></div>
<div class="a" style="left:1322px;top:230px;width:2px;height:2px;background:#000"></div>
<div class="a" style="left:545px;top:243px;width:784px;height:69px;background:#fff"></div>
<div class="a" style="left:566px;top:242px;width:762px;height:69px;border:1px solid #d4d6db;border-top-color:#c8cacf;background:#fff"></div>
<div class="a" style="left:571.6px;top:246px;width:64.39999999999998px;height:19px;background:linear-gradient(#e6e7eb,#d9dade);border:1px solid #c4c6cc;border-bottom:none"></div>
<div class="t" style="left:579.6px;top:250.89px;font-size:11px;color:#4a4c5c;font-weight:normal;">Item Fees</div>
<div class="a" style="left:637.8px;top:246px;width:74.20000000000005px;height:19px;background:linear-gradient(#e6e7eb,#d9dade);border:1px solid #c4c6cc;border-bottom:none"></div>
<div class="t" style="left:645.2px;top:250.89px;font-size:11px;color:#4a4c5c;font-weight:normal;">Item Meters</div>
<div class="a" style="left:713.6px;top:246px;width:88.89999999999998px;height:19px;background:linear-gradient(#e6e7eb,#d9dade);border:1px solid #c4c6cc;border-bottom:none"></div>
<div class="t" style="left:721.3px;top:250.89px;font-size:11px;color:#4a4c5c;font-weight:normal;">Item Inclusions</div>
<div class="t" style="left:811.7px;top:249.69px;font-size:11px;color:#16162a;font-weight:normal;">Item Contacts</div>
<div class="a" style="left:569px;top:266px;width:752px;height:20px;background:linear-gradient(#f9f9fb,#eeeff2);border-bottom:1px solid #d0d2d7"></div>
<div class="a" style="left:569px;top:286px;width:752px;height:21px;background:#ebebee"></div>
<div class="a" style="left:583px;top:286px;width:106px;height:21px;background:#fff"></div>
<div class="a" style="left:569px;top:286px;width:14px;height:21px;background:#f3f3f5"></div>
<div class="a" style="left:583px;top:266px;width:1px;height:41px;background:#d6d8dd"></div>
<div class="t" style="left:586.8px;top:269.69px;font-size:11px;color:#12123a;font-weight:normal;">ContactName</div>
<div class="a" style="left:689px;top:266px;width:1px;height:41px;background:#d6d8dd"></div>
<div class="t" style="left:692.8px;top:269.69px;font-size:11px;color:#12123a;font-weight:normal;">ContactType</div>
<div class="a" style="left:811.5px;top:266px;width:1px;height:41px;background:#d6d8dd"></div>
<div class="t" style="left:815.3px;top:269.69px;font-size:11px;color:#12123a;font-weight:normal;">ContactMethod</div>
<div class="a" style="left:910.5px;top:266px;width:1px;height:41px;background:#d6d8dd"></div>
<div class="t" style="left:914.3px;top:269.69px;font-size:11px;color:#12123a;font-weight:normal;">ContactEmail</div>
<div class="a" style="left:1009.8px;top:266px;width:1px;height:41px;background:#d6d8dd"></div>
<div class="t" style="left:1013.5999999999999px;top:269.69px;font-size:11px;color:#12123a;font-weight:normal;">ContactPhoneNumber</div>
<div class="a" style="left:1135px;top:266px;width:1px;height:41px;background:#d6d8dd"></div>
<div class="t" style="left:1138.8px;top:269.69px;font-size:11px;color:#12123a;font-weight:normal;">ContactMobile</div>
<div class="a" style="left:1236.5px;top:266px;width:1px;height:41px;background:#d6d8dd"></div>
<div class="t" style="left:1240.3px;top:269.69px;font-size:11px;color:#12123a;font-weight:normal;">IsMeterContact</div>
<svg style="left:571px;top:270px" width="8" height="8" viewBox="0 0 8 8"><circle cx="3" cy="3" r="2.2" fill="none" stroke="#222" stroke-width="1.2"/><line x1="4.5" y1="4.5" x2="7.5" y2="7.5" stroke="#222" stroke-width="1.6"/></svg>
<svg style="left:799.5px;top:273px" width="7" height="5" viewBox="0 0 7 5"><polygon points="0,4.5 7,4.5 3.5,0.5" fill="#222"/></svg>
<svg style="left:574px;top:292px" width="5" height="9" viewBox="0 0 5 9"><polygon points="0.5,0.5 4.5,4.5 0.5,8.5" fill="#1a1a2a"/></svg>
<div class="t" style="left:692.8px;top:290.19px;font-size:11px;color:#1c1c2c;font-weight:normal;">Select contract type...</div>
<div class="t" style="left:814.8px;top:290.19px;font-size:11px;color:#1c1c2c;font-weight:normal;">Select method...</div>
<div class="a" style="left:1272px;top:290px;width:12px;height:11px;border:1px solid #8a9ad0;background:linear-gradient(#c8d4f4,#8ea6e6)"></div>
<div class="a" style="left:1274px;top:292px;width:8px;height:7px;background:linear-gradient(#9cb0ec,#6a86d8);border:1px solid #e6ecfa"></div>
<svg style="left:560px;top:238px" width="775" height="80" viewBox="0 0 775 80">
<path d="M7.5,27.5 H243.5 V5.5 H330.5 V27.5 H764.5 V70.5 H7.5 Z" fill="none" stroke="#000" stroke-width="3"/></svg>
<div class="a" style="left:529px;top:312px;width:16px;height:22px;background:#f3f3f5;border-right:1px solid #d6d8dd;border-top:1px solid #d6d8dd;border-bottom:1px solid #d6d8dd"></div>
<svg style="left:533px;top:319px" width="9" height="9" viewBox="0 0 9 9"><path d="M4.5,0.3 V8.7 M0.3,4.5 H8.7 M1.5,1.5 L7.5,7.5 M7.5,1.5 L1.5,7.5" stroke="#15152a" stroke-width="1.4"/><circle cx="4.5" cy="4.5" r="1.1" fill="#f3f3f5"/></svg>
<div class="a" style="left:544.5px;top:312px;width:81.70000000000005px;height:22px;background:#1fb0a5;border-left:1px solid #e4e6ea;border-top:1px solid #d6d8dd;border-bottom:1px solid #d6d8dd"></div>
<div class="a" style="left:626.2px;top:312px;width:106.39999999999998px;height:22px;background:#1fb0a5;border-left:1px solid #e4e6ea;border-top:1px solid #d6d8dd;border-bottom:1px solid #d6d8dd"></div>
<div class="a" style="left:732.6px;top:312px;width:76.0px;height:22px;background:#1fb0a5;border-left:1px solid #e4e6ea;border-top:1px solid #d6d8dd;border-bottom:1px solid #d6d8dd"></div>
<div class="a" style="left:808.6px;top:312px;width:76.69999999999993px;height:22px;background:#1fb0a5;border-left:1px solid #e4e6ea;border-top:1px solid #d6d8dd;border-bottom:1px solid #d6d8dd"></div>
<div class="a" style="left:885.3px;top:312px;width:62.40000000000009px;height:22px;background:#1fb0a5;border-left:1px solid #e4e6ea;border-top:1px solid #d6d8dd;border-bottom:1px solid #d6d8dd"></div>
<div class="a" style="left:947.7px;top:312px;width:76.70000000000005px;height:22px;background:#1fb0a5;border-left:1px solid #e4e6ea;border-top:1px solid #d6d8dd;border-bottom:1px solid #d6d8dd"></div>
<div class="a" style="left:1024.4px;top:312px;width:73.0px;height:22px;background:#1fb0a5;border-left:1px solid #e4e6ea;border-top:1px solid #d6d8dd;border-bottom:1px solid #d6d8dd"></div>
<div class="a" style="left:1097.4px;top:312px;width:60.299999999999955px;height:22px;background:#fdfde4;border-left:1px solid #e4e6ea;border-top:1px solid #d6d8dd;border-bottom:1px solid #d6d8dd"></div>
<div class="a" style="left:1157.7px;top:312px;width:170.79999999999995px;height:22px;background:#fdfde4;border-left:1px solid #e4e6ea;border-top:1px solid #d6d8dd;border-bottom:1px solid #d6d8dd"></div>
<div class="a" style="left:529px;top:657px;width:802px;height:30px;background:#e9eaee;border-top:1px solid #c8cacf"></div>
<div class="a" style="left:529px;top:686px;width:802px;height:18px;background:#f4f4f6"></div>
<svg style="left:534px;top:691px" width="5" height="8" viewBox="0 0 5 8"><polygon points="4.5,0 4.5,8 0.5,4" fill="#707078"/></svg>
<svg style="left:1320px;top:691px" width="5" height="8" viewBox="0 0 5 8"><polygon points="0.5,0 0.5,8 4.5,4" fill="#707078"/></svg>
<div class="a" style="left:546px;top:691px;width:482px;height:8px;border:1px solid #a8aab2;border-radius:4px;background:linear-gradient(#f2f2f4,#dadbe0)"></div>
<div class="a" style="left:2px;top:705px;width:1333px;height:30px;background:linear-gradient(#e7e8ec,#dcdde2 50%,#d2d3d8)"></div>
<div class="a" style="left:4px;top:705px;width:1329px;height:1px;background:#c9cbd0"></div>
<div class="a" style="left:4px;top:732px;width:1329px;height:1px;background:#a9abb2"></div>
<div class="a" style="left:2px;top:733px;width:1333px;height:2px;background:#f2f2f4"></div>
<div class="t" style="left:12.2px;top:713.89px;font-size:11px;color:#1c1c3a;font-weight:normal;transform:scaleX(0.9760);transform-origin:0 0;">Open Windows</div>
<svg style="left:88px;top:716px" width="7" height="4" viewBox="0 0 7 4"><polygon points="0,0 7,0 3.5,4" fill="#2a2a3a"/></svg>
<div class="a" style="left:880px;top:709px;width:1px;height:21px;background:#c2c4ca"></div>
<div class="a" style="left:881px;top:709px;width:1px;height:21px;background:#f2f2f4"></div>
<div class="a" style="left:969px;top:709px;width:1px;height:21px;background:#c2c4ca"></div>
<div class="a" style="left:970px;top:709px;width:1px;height:21px;background:#f2f2f4"></div>
<div class="a" style="left:1042px;top:709px;width:1px;height:21px;background:#c2c4ca"></div>
<div class="a" style="left:1043px;top:709px;width:1px;height:21px;background:#f2f2f4"></div>
<div class="a" style="left:1140px;top:709px;width:1px;height:21px;background:#c2c4ca"></div>
<div class="a" style="left:1141px;top:709px;width:1px;height:21px;background:#f2f2f4"></div>
<div class="t" style="left:889.8px;top:713.89px;font-size:11px;color:#1c1c3a;font-weight:normal;transform:scaleX(1.0013);transform-origin:0 0;">User : JudithM</div>
<div class="t" style="left:976.5px;top:713.89px;font-size:11px;color:#1c1c3a;font-weight:normal;transform:scaleX(1.0226);transform-origin:0 0;">04/12/2019</div>
<div class="t" style="left:1048.5px;top:713.89px;font-size:11px;color:#1c1c3a;font-weight:normal;transform:scaleX(1.0440);transform-origin:0 0;">Version : 2.3.0.4</div>
<div class="t" style="left:1147.5px;top:713.89px;font-size:11px;color:#1c1c3a;font-weight:normal;transform:scaleX(0.9025);transform-origin:0 0;">TEST ALPHA - JUDITH PC LOCAL</div>
<svg style="left:1318px;top:720px" width="12" height="12" viewBox="0 0 12 12">
<path d="M11,3 L3,11 M11,6 L6,11 M11,9 L9,11" stroke="#9a9ca4" stroke-width="1.2"/></svg></body></html>
